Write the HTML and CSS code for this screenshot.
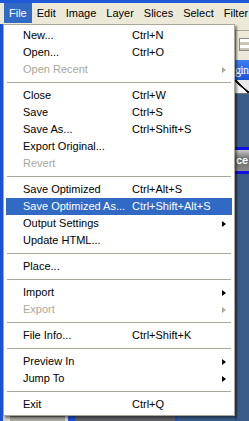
FILE: index.html
```html
<!DOCTYPE html>
<html lang="en">
<head>
    <meta charset="UTF-8">
    <title>File menu</title>
    <link rel="stylesheet" href="styles.css">
</head>
<body>
    <div class="screen">
        <div class="titlebar"></div>

        <nav class="menubar">
            <span class="menubar-item active">File</span>
            <span class="menubar-item">Edit</span>
            <span class="menubar-item">Image</span>
            <span class="menubar-item">Layer</span>
            <span class="menubar-item">Slices</span>
            <span class="menubar-item">Select</span>
            <span class="menubar-item">Filter</span>
        </nav>

        <div class="workspace">
            <div class="edge-left"></div>
            <div class="canvas">
                <div class="canvas-fill"></div>
                <div class="bottom-strip">
                    <span class="strip-beige"></span>
                    <span class="strip-gray"></span>
                    <span class="strip-beige small"></span>
                    <span class="strip-blue"></span>
                    <span class="strip-dark"></span>
                    <span class="strip-blue thin"></span>
                    <span class="strip-slate"></span>
                </div>
            </div>
            <div class="side">
                <div class="side-band"></div>
                <div class="side-toolbar"><span class="tool-icon"></span></div>
                <div class="side-title">gin</div>
                <div class="side-tab"></div>
                <div class="side-fill short"></div>
                <div class="side-panel">ce</div>
                <div class="side-fill"></div>
            </div>
        </div>

        <!-- dropdown for File -->
        <ul class="menu">
            <li class="item"><span class="label">New...</span><span class="key">Ctrl+N</span></li>
            <li class="item"><span class="label">Open...</span><span class="key">Ctrl+O</span></li>
            <li class="item disabled"><span class="label">Open Recent</span><span class="key"></span><span class="arrow"></span></li>
            <li class="sep"></li>
            <li class="item"><span class="label">Close</span><span class="key">Ctrl+W</span></li>
            <li class="item"><span class="label">Save</span><span class="key">Ctrl+S</span></li>
            <li class="item"><span class="label">Save As...</span><span class="key">Ctrl+Shift+S</span></li>
            <li class="item"><span class="label">Export Original...</span><span class="key"></span></li>
            <li class="item disabled"><span class="label">Revert</span><span class="key"></span></li>
            <li class="sep"></li>
            <li class="item"><span class="label">Save Optimized</span><span class="key">Ctrl+Alt+S</span></li>
            <li class="item selected"><span class="label">Save Optimized As...</span><span class="key">Ctrl+Shift+Alt+S</span></li>
            <li class="item"><span class="label">Output Settings</span><span class="key"></span><span class="arrow"></span></li>
            <li class="item"><span class="label">Update HTML...</span><span class="key"></span></li>
            <li class="sep"></li>
            <li class="item"><span class="label">Place...</span><span class="key"></span></li>
            <li class="sep"></li>
            <li class="item"><span class="label">Import</span><span class="key"></span><span class="arrow"></span></li>
            <li class="item disabled"><span class="label">Export</span><span class="key"></span><span class="arrow"></span></li>
            <li class="sep"></li>
            <li class="item"><span class="label">File Info...</span><span class="key">Ctrl+Shift+K</span></li>
            <li class="sep"></li>
            <li class="item"><span class="label">Preview In</span><span class="key"></span><span class="arrow"></span></li>
            <li class="item"><span class="label">Jump To</span><span class="key"></span><span class="arrow"></span></li>
            <li class="sep"></li>
            <li class="item"><span class="label">Exit</span><span class="key">Ctrl+Q</span></li>
        </ul>
    </div>
</body>
</html>
```

FILE: styles.css
```css
/* Reset and font */
* {
    margin: 0;
    padding: 0;
    box-sizing: border-box;
}

body {
    font-family: "Liberation Sans", Arial, sans-serif;
    font-size: 11px;
    color: #000;
    background-color: #3b5c88;
}

.screen {
    position: relative;
    width: 249px;
    height: 421px;
    overflow: hidden;
}

/* Window title bar edge */
.titlebar {
    height: 3px;
    background-color: #1f5ad8;
}

/* Menu bar */
.menubar {
    display: flex;
    height: 21px;
    padding-left: 4px;
    background-color: #ece9d8;
    white-space: nowrap;
}

.menubar-item {
    height: 20px;
    line-height: 20px;
    padding: 0 5px;
}

.menubar-item.active {
    background-color: #316ac5;
    color: #fff;
}

/* Stuff behind the menu */
.workspace {
    display: flex;
    height: 397px;
}

.edge-left {
    width: 3px;
    background-color: #1c51d6;
}

.canvas {
    flex: 1;
    display: flex;
    flex-direction: column;
}

.canvas-fill {
    flex: 1;
    background-color: #3b5c88;
}

.bottom-strip {
    display: flex;
    height: 5px;
}

.strip-beige {
    width: 7px;
    background-color: #d6d2c2;
}

.strip-beige.small {
    width: 3px;
}

.strip-gray {
    width: 55px;
    background-color: #a8a69c;
    border-top: 1px solid #6f6d66;
}

.strip-blue {
    width: 7px;
    background-color: #1f4fd0;
}

.strip-blue.thin {
    width: 3px;
}

.strip-dark {
    width: 100px;
    background-color: #5e6066;
}

.strip-slate {
    flex: 1;
    background-color: #3b5c88;
}

.side {
    width: 14px;
    display: flex;
    flex-direction: column;
}

.side-band {
    height: 7px;
    background-color: #ece9d8;
    border-bottom: 1px solid #aca899;
}

.side-toolbar {
    height: 29px;
    padding: 7px 0 0 3px;
    background-color: #ece9d8;
    border-left: 1px solid #aca899;
}

.tool-icon {
    display: block;
    width: 11px;
    height: 13px;
    border: 1px solid #8d8b80;
    background: linear-gradient(#fff 0 3px, #c9c6b8 3px 6px, #fff 6px 9px, #c9c6b8 9px);
}

.side-title {
    height: 20px;
    line-height: 20px;
    background: linear-gradient(#3d7cf0, #1a54d6);
    color: #fff;
    font-family: "Liberation Serif", serif;
    font-size: 12px;
    letter-spacing: -0.7px;
    white-space: nowrap;
}

.side-tab {
    height: 14px;
    background: linear-gradient(to bottom left, #e8e8e8 45%, #111 46% 55%, #f4f4f4 56%);
    border-bottom: 1px solid #777;
}

.side-fill {
    flex: 1;
    background-color: #3b5c88;
    border-left: 2px solid #34517a;
}

.side-fill.short {
    flex: none;
    height: 53px;
}

.side-panel {
    height: 27px;
    line-height: 21px;
    padding-left: 1px;
    color: #fff;
    font-weight: bold;
    font-size: 11px;
    background: linear-gradient(#c8c8c8, #6a6a6a 45%, #8a8a8a);
    border-top: 3px solid #1010e0;
    border-bottom: 3px solid #1010e0;
    white-space: nowrap;
}

/* File dropdown */
.menu {
    position: absolute;
    left: 3px;
    top: 24px;
    width: 232px;
    padding: 2px;
    list-style: none;
    background-color: #fff;
    border: 1px solid #aca899;
    box-shadow: 2px 2px 2px rgba(0, 0, 0, 0.45);
}

.item {
    display: grid;
    grid-template-columns: 109px 1fr 4px;
    align-items: center;
    height: 17px;
    line-height: 17px;
    padding: 0 6px 0 17px;
    white-space: nowrap;
}

.item.selected {
    background-color: #316ac5;
    color: #fff;
}

.item.disabled {
    color: #aca899;
}

.arrow {
    width: 0;
    height: 0;
    border-top: 3.5px solid transparent;
    border-bottom: 3.5px solid transparent;
    border-left: 4px solid #000;
}

.item.disabled .arrow {
    border-left-color: #aca899;
}

.sep {
    height: 1px;
    margin: 4px 1px;
    background-color: #aca899;
}
```
